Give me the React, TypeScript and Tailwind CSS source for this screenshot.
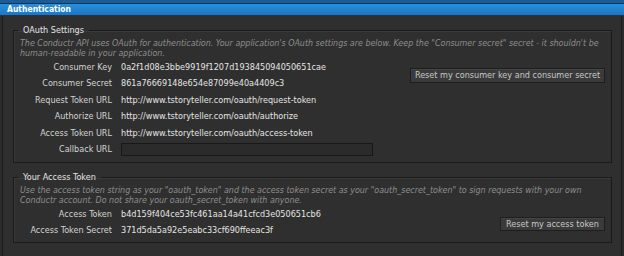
import React from "react";

const font = "font-['DejaVu_Sans_Condensed','DejaVu_Sans',sans-serif] font-stretch-condensed";

function Row({ label, value, h = "h-[16.5px]" }: { label: string; value?: React.ReactNode; h?: string }) {
  return (
    <div className={`flex items-center ${h}`}>
      <div className="w-[92px] shrink-0 text-right text-[#d4d4d4]">{label}</div>
      <div className="ml-[9px] text-[#e6e6e6] whitespace-nowrap">{value}</div>
    </div>
  );
}

export default function App() {
  return (
    <div className={`w-[624px] h-[256px] bg-[#2c2c2c] flex flex-col overflow-hidden text-[9px] ${font}`}>
      <div className="h-[3px] bg-[#1b5c97]" />
      <div className="h-px bg-[#0c365c]" />
      <div className="h-[11px] bg-gradient-to-b from-[#2a90db] to-[#1a76c6] text-white font-bold leading-[11px] pl-[7px] text-[8.5px]">
        Authentication
      </div>
      <div className="h-px bg-[#0e3a62]" />
      <div className="flex-1 mx-[2px] border-x border-[#1c1c1c] bg-[#2f2f2f] pl-[10px] pr-[9px] pt-[8px]">
        <fieldset className="min-w-0 border border-[#1a1a1a] pl-[6px] pr-[6px] pb-[4px] shadow-[inset_1px_1px_0_#3a3a3a]">
          <legend className="ml-[-2px] px-[5px] text-[#e4e4e4] text-[9px] leading-[12px]">OAuth Settings</legend>
          <div className="italic text-[#8e8e8e] leading-[10px] pt-[2px] text-[8.85px] whitespace-nowrap">
            The Conductr API uses OAuth for authentication. Your application's OAuth settings are below. Keep the "Consumer secret" secret - it shouldn't be
            <br />
            human-readable in your application.
          </div>
          <div className="flex mt-[1px]">
            <div className="flex-1">
              <Row label="Consumer Key" value="0a2f1d08e3bbe9919f1207d193845094050651cae" />
              <Row label="Consumer Secret" value="861a76669148e654e87099e40a4409c3" />
              <Row label="Request Token URL" value="http://www.tstoryteller.com/oauth/request-token" />
              <Row label="Authorize URL" value="http://www.tstoryteller.com/oauth/authorize" />
              <Row label="Access Token URL" value="http://www.tstoryteller.com/oauth/access-token" />
              <Row
                label="Callback URL"
                value={<div className="w-[252px] h-[13px] border border-[#181818] bg-[#2b2b2b]" />}
              />
            </div>
            <div className="mt-[9px]">
              <button className="h-[15px] w-[195px] bg-[#3a3a3a] border border-[#1e1e1e] text-[#c8c8c8] leading-[13px] shadow-[inset_0_1px_0_#454545]">
                Reset my consumer key and consumer secret
              </button>
            </div>
          </div>
        </fieldset>
        <fieldset className="min-w-0 mt-[8px] border border-[#1a1a1a] pl-[6px] pr-[6px] pb-[4px] shadow-[inset_1px_1px_0_#3a3a3a]">
          <legend className="ml-[-2px] px-[5px] text-[#e4e4e4] text-[9px] leading-[12px]">Your Access Token</legend>
          <div className="italic text-[#8e8e8e] leading-[10px] pt-[2px] text-[8.85px] whitespace-nowrap">
            Use the access token string as your "oauth_token" and the access token secret as your "oauth_secret_token" to sign requests with your own
            <br />
            Conductr account. Do not share your oauth_secret_token with anyone.
          </div>
          <div className="flex mt-[2px]">
            <div className="flex-1">
              <Row label="Access Token" value="b4d159f404ce53fc461aa14a41cfcd3e050651cb6" h="h-[15.7px]" />
              <Row label="Access Token Secret" value="371d5da5a92e5eabc33cf690ffeeac3f" h="h-[15.7px]" />
            </div>
            <div className="mt-[10px]">
              <button className="h-[14px] w-[105px] bg-[#3a3a3a] border border-[#1e1e1e] text-[#c8c8c8] leading-[12px] shadow-[inset_0_1px_0_#454545]">
                Reset my access token
              </button>
            </div>
          </div>
        </fieldset>
      </div>
    </div>
  );
}
